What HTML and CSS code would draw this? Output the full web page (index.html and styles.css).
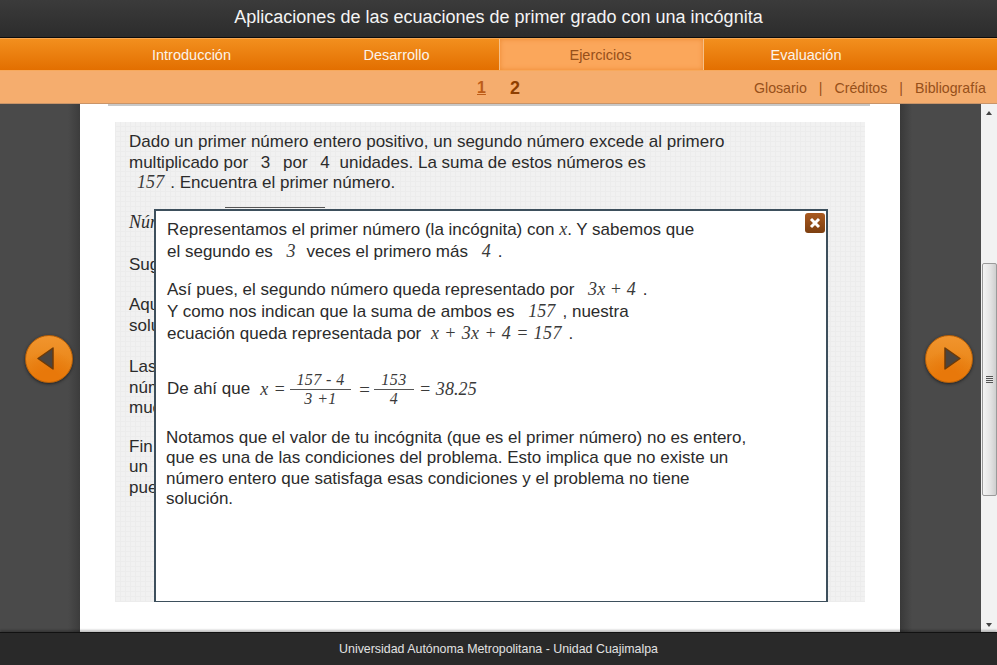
FILE: index.html
```html
<!DOCTYPE html>
<html lang="es">
<head>
<meta charset="utf-8">
<title>Aplicaciones de las ecuaciones de primer grado con una incógnita</title>
<link rel="stylesheet" href="styles.css">
</head>
<body>
<header class="title-bar"><h1>Aplicaciones de las ecuaciones de primer grado con una incógnita</h1></header>
<nav class="main-nav">
  <a class="tab">Introducción</a>
  <a class="tab">Desarrollo</a>
  <a class="tab active">Ejercicios</a>
  <a class="tab">Evaluación</a>
</nav>
<div class="sub-nav">
  <div class="pager"><a class="page-link">1</a><span class="page-current">2</span></div>
  <div class="links"><a>Glosario</a><i>|</i><a>Créditos</a><i>|</i><a>Bibliografía</a></div>
</div>
<main class="stage">
  <aside class="side side-left">
    <button class="arrow" aria-label="Anterior"><svg width="48" height="48" viewBox="0 0 48 48"><polygon points="13,23.500 28,13 28,34" fill="#4a4440" stroke="#6d3a08" stroke-width="1.500" stroke-linejoin="round"/></svg></button>
  </aside>
  <section class="page">
    <div class="page-rule"></div>
    <div class="panel">
      <p class="lead">Dado un primer número entero positivo, un segundo número excede al primero<br>multiplicado por <span class="num">3</span> por <span class="num num-b">4</span> unidades. La suma de estos números es<br><em class="math first">157</em>. Encuentra el primer número.</p>
      <div class="answer-row"><em class="math-label">Número</em><span class="answer-line"></span></div>
      <p class="hidden-a">Sugerencia</p>
      <p class="hidden-b">Aquí<br>solución</p>
      <p class="hidden-c">Las<br>número<br>mucho</p>
      <p class="hidden-d">Fin de<br>un<br>puedes</p>
      <div class="modal">
        <button class="close" aria-label="Cerrar"><svg width="12" height="12" viewBox="0 0 12 12"><path d="M2 2L10 10M10 2L2 10" stroke="#fff" stroke-width="3"/></svg></button>
        <p class="m-first">Representamos el primer número (la incógnita) con <em class="math">x</em>. Y sabemos que<br>el segundo es <em class="math gap">3</em> veces el primero más <em class="math gap end">4</em>.</p>
        <p class="m-second">Así pues, el segundo número queda representado por <em class="math gap end">3x + 4</em>.<br>Y como nos indican que la suma de ambos es <em class="math gap end">157</em>, nuestra<br>ecuación queda representada por <em class="math tight">x + 3x + 4 = 157</em> .</p>
        <p class="m-formula"><span>De ahí que</span><em class="math lhs">x =</em><span class="frac frac-a"><em>157 - 4</em><em>3 +1</em></span><em class="math eq">=</em><span class="frac frac-b"><em>153</em><em>4</em></span><em class="math result">= 38.25</em></p>
        <p class="m-last">Notamos que el valor de tu incógnita (que es el primer número) no es entero,<br>que es una de las condiciones del problema. Esto implica que no existe un<br>número entero que satisfaga esas condiciones y el problema no tiene<br>solución.</p>
      </div>
    </div>
  </section>
  <aside class="side side-right">
    <button class="arrow" aria-label="Siguiente"><svg width="48" height="48" viewBox="0 0 48 48"><polygon points="35,23.500 20,13 20,34" fill="#4a4440" stroke="#6d3a08" stroke-width="1.500" stroke-linejoin="round"/></svg></button>
  </aside>
  <div class="scrollbar">
    <span class="sb-up"></span>
    <span class="sb-thumb"><span class="grip"></span></span>
    <span class="sb-down"></span>
  </div>
</main>
<footer class="footer">Universidad Autónoma Metropolitana - Unidad Cuajimalpa</footer>
</body>
</html>
```
FILE: styles.css
```css
* { box-sizing: border-box; }
html, body { margin: 0; height: 100%; }
body {
  width: 997px; height: 665px; overflow: hidden;
  display: flex; flex-direction: column;
  font-family: "Liberation Sans", Arial, sans-serif;
  color: #2b2b2b; background: #444;
}
.title-bar {
  height: 38px; flex: none;
  background: linear-gradient(#3b3b3b, #2c2c2c);
  border-bottom: 1px solid #0c0c0c;
  display: flex; align-items: center; justify-content: center;
}
.title-bar h1 { margin: 0; font-size: 18px; font-weight: 400; color: #f4f4f4; position: relative; top: -1px; }
.main-nav {
  height: 33px; flex: none; display: grid;
  grid-template-columns: repeat(3, 205px) 204px;
  padding-left: 89px;
  background: linear-gradient(#f28f1e, #e36f00);
  border-top: 1px solid #f6a650;
  border-bottom: 1px solid #f7a95c;
}
.tab { color: #fbf3ea; font-size: 14.500px; display: flex; align-items: center; justify-content: center; }
.active {
  background: #fba75b; color: #97501a;
  border-left: 1px solid #f6c089; border-right: 1px solid #f6c089;
  box-shadow: inset 0 0 5px #ee8a32;
  padding-right: 2px;
}
.sub-nav {
  height: 33px; flex: none; position: relative;
  background: #f5ad6e;
  border-bottom: 1px solid #c99468;
  display: flex; align-items: center; justify-content: flex-end;
  padding: 2px 11px 0 0; color: #97501a; font-size: 14.200px;
}
.pager {
  position: absolute; left: 477px; top: 1px; height: 32px;
  display: flex; align-items: center; gap: 24px;
  font-weight: 700; font-size: 16px; color: #8f3f00;
}
.page-link { color: #bd5d18; text-decoration: underline; }
.page-current { font-size: 18px; }
.links { display: flex; gap: 12px; }
.links i { font-style: normal; color: #9b4f1a; }
.stage { flex: 1; display: flex; min-height: 0; position: relative; }
.side {
  flex: none; display: flex; align-items: center; justify-content: center;
  background-color: #474747;
  padding-bottom: 19px;
}
.side-left { width: 80px; padding-left: 18px; background-image: linear-gradient(90deg, #4a4a4a 85%, #3c3c3c); }
.side-right { width: 81px; padding-left: 16px; background-image: linear-gradient(90deg, #393939, #4a4a4a 15%); }
.arrow {
  width: 48px; height: 48px; border-radius: 50%; padding: 0; margin: 0;
  border: 1px solid #b95f05;
  background: radial-gradient(circle at 50% 95%, #e8780a 20%, transparent 60%), linear-gradient(#f1952e, #e67d0c);
  box-shadow: 0 1px 3px #222;
  display: flex; align-items: center; justify-content: center;
}
.arrow svg { flex: none; }
.page { flex: none; width: 820px; background: #fff; padding: 18px 35px 0; position: relative; }
.page-rule { position: absolute; left: 28px; right: 30px; top: 0; height: 2px; background: #c8c8c8; }
.panel {
  width: 750px; height: 480px; position: relative; overflow: hidden;
  padding: 10px 14px 0;
  font-size: 17px; line-height: 20.500px;
  background-color: #f1f1f1;
  background-image:
    repeating-linear-gradient(0deg, #ececec 0 1px, transparent 1px 5px),
    repeating-linear-gradient(90deg, #ececec 0 1px, transparent 1px 5px);
}
.panel p { margin: 0; }
.num { margin: 0 8px; }
.num-b { margin-right: 5px; }
.math {
  font-family: "Liberation Serif", "Times New Roman", serif; font-style: italic;
  font-size: 18px; line-height: 1; letter-spacing: .1px; color: #3a3a3a;
}
.first { margin: 0 6px 0 8px; }
.gap { margin: 0 6px 0 9px; }
.gap.end { margin-right: 7px; }
.tight { margin: 0 2px 0 5px; letter-spacing: .4px; }
.answer-row { margin-top: 18px; height: 24px; position: relative; }
.math-label { font-family: "Liberation Serif", serif; font-size: 18px; }
.answer-line { position: absolute; left: 96px; top: -5px; width: 100px; height: 1px; background: #555; }
.hidden-a { margin-top: 19px !important; }
.hidden-b { margin-top: 20px !important; }
.hidden-c { margin-top: 21px !important; }
.hidden-d { margin-top: 18px !important; }
.modal {
  position: absolute; left: 39px; top: 87px; width: 674px; height: 400px;
  background: #fff; border: 2px solid #3d4f5c; border-bottom-width: 0;
  padding: 8px 11px 0;
  line-height: 22px; color: #2b2b2b;
}
.modal::after { content: ""; position: absolute; left: -2px; right: -2px; top: 390px; height: 2px; background: #3d4f5c; }
.close {
  position: absolute; right: 1px; top: 2px; width: 20px; height: 20px; padding: 0;
  border: 0; border-radius: 3px; background: linear-gradient(#a9591f, #7d3f10);
  display: flex; align-items: center; justify-content: center;
}
.m-second { margin-top: 16px !important; }
.m-formula { margin-top: 22px !important; display: flex; align-items: center; height: 44px; }
.lhs { margin: 0 1px 0 10px; letter-spacing: .4px; }
.frac {
  display: inline-flex; flex-direction: column; align-items: center;
  font-family: "Liberation Serif", serif; font-size: 16px; line-height: 17px; color: #3a3a3a; letter-spacing: .4px;
}
.frac-a { margin: 0 7px 0 3px; width: 61px; }
.frac-b { margin: 0 5px 0 3px; width: 40px; }
.frac em:first-child { border-bottom: 1px solid #555; display: block; width: 100%; text-align: center; white-space: nowrap; padding-bottom: 1px; }
.eq { margin: 0; font-size: 19px; }
.result { white-space: pre; letter-spacing: .1px; }
.m-last { margin: 17px 0 0 -1px !important; line-height: 20.300px; }
.scrollbar {
  width: 16px; flex: none; background: #f2f2f2;
  display: flex; flex-direction: column; position: relative;
}
.sb-up, .sb-down { position: absolute; left: 5px; width: 0; height: 0; border-left: 3px solid transparent; border-right: 3px solid transparent; }
.sb-up { top: 7px; border-bottom: 4px solid #444; }
.sb-down { bottom: 5px; border-top: 4px solid #444; }
.sb-thumb {
  position: absolute; left: 1px; top: 159px; width: 15px; height: 233px;
  border: 1px solid #9a9a9a; border-radius: 2px;
  background: linear-gradient(90deg, #f4f4f4, #e6e6e6 50%, #cfcfcf);
  display: flex; align-items: center; justify-content: center;
}
.grip { width: 7px; height: 7px; background: repeating-linear-gradient(#555 0 1px, #e8e8e8 1px 2px); }
.footer {
  height: 33px; flex: none; background: #292929; border-top: 1px solid #111;
  box-shadow: 0 -2px 2px rgba(0,0,0,.25);
  color: #e2e2e2; font-size: 12.400px; display: flex; align-items: center; justify-content: center;
  position: relative;
}
```
